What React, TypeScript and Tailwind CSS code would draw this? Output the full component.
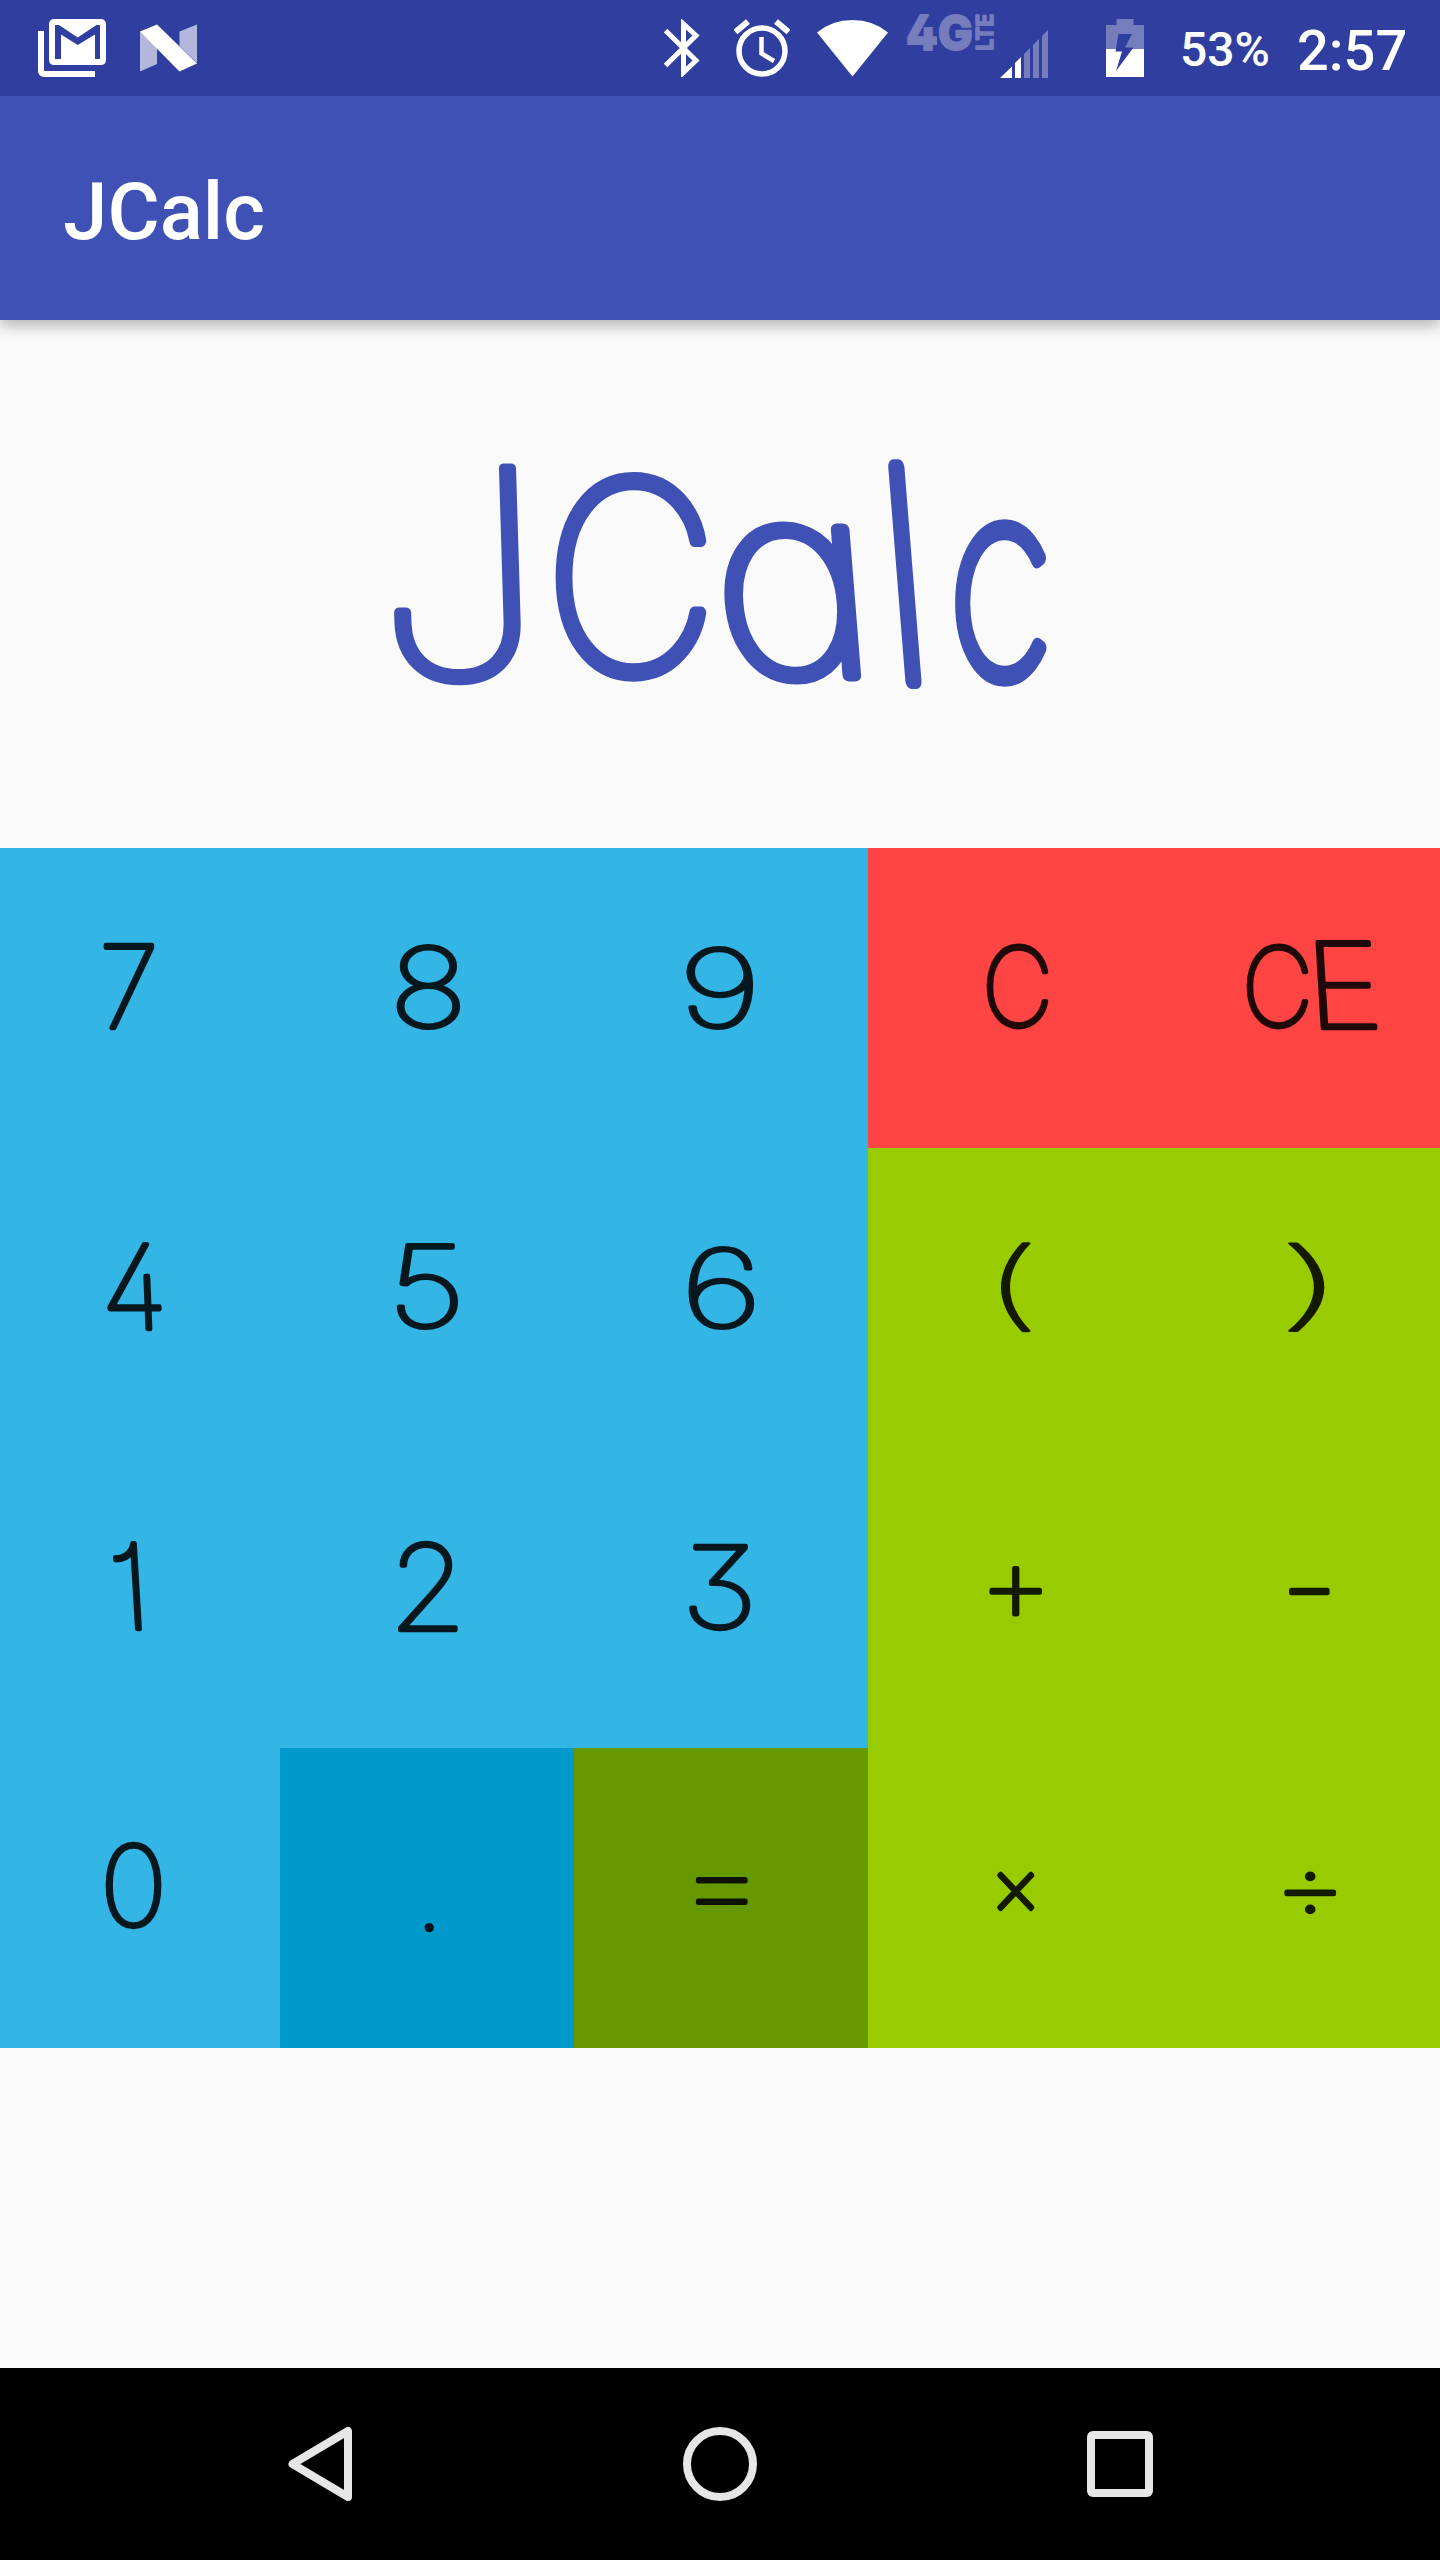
import React from "react";

type Box = [x: number, y: number, w: number, h: number];

interface GlyphProps {
  text: string;
  box: Box;
  pen: number;
  skew?: number;
  font?: string;
  weight?: number;
}

const EM = 120;
const measureCtx = document.createElement("canvas").getContext("2d")!;

/* Real text stretched so that its ink, pen width included, fills the given box. */
function Glyph({ text, box, pen, skew = 0, font = "Inter", weight = 100 }: GlyphProps) {
  measureCtx.font = `${weight} ${EM}px ${font}`;
  const m = measureCtx.measureText(text);
  const left = -m.actualBoundingBoxLeft;
  const top = -m.actualBoundingBoxAscent;
  const inkW = m.actualBoundingBoxRight - left;
  const inkH = m.actualBoundingBoxDescent - top;
  const [x, y, w, h] = box;
  const shear = Math.abs(skew) * (h - pen);
  const sx = (w - pen - shear) / inkW;
  const sy = (h - pen) / inkH;
  const cx = x + w / 2;
  const cy = y + h / 2;
  const mx = left + inkW / 2;
  const my = top + inkH / 2;
  return (
    <text
      transform={`matrix(${sx} 0 ${skew * sy} ${sy} ${cx - sx * mx - skew * sy * my} ${cy - sy * my})`}
      fontFamily={`${font}, sans-serif`}
      fontSize={EM}
      fontWeight={weight}
      fill="currentColor"
      stroke="currentColor"
      strokeWidth={pen}
      strokeLinejoin="round"
      strokeLinecap="round"
      vectorEffect="non-scaling-stroke"
      className="[font-feature-settings:'cv01','cv02','cv09','cv11']"
    >
      {text}
    </text>
  );
}

interface Key {
  label: string;
  bg: string;
  glyphs: { t: string; b: Box; skew?: number; pen?: number }[];
}

const BLUE = "bg-[#33b5e5]";
const RED = "bg-[#ff4444]";
const GREEN = "bg-[#99cc00]";

const keys: Key[] = [
  { label: "7", bg: BLUE, glyphs: [{ t: "7", b: [117, 95, 52, 87] }] },
  { label: "8", bg: BLUE, glyphs: [{ t: "8", b: [116, 95, 64, 87] }] },
  { label: "9", bg: BLUE, glyphs: [{ t: "9", b: [112, 97, 68, 85] }] },
  { label: "C", bg: RED, glyphs: [{ t: "C", b: [118, 95, 63, 86] }] },
  { label: "CE", bg: RED, glyphs: [{ t: "C", b: [84, 95, 63, 86] }, { t: "E", b: [153, 92, 63, 90], skew: 0.06 }] },
  { label: "4", bg: BLUE, glyphs: [{ t: "4", b: [118, 94, 59, 89], skew: 0.04 }] },
  { label: "5", bg: BLUE, glyphs: [{ t: "5", b: [117, 95, 61, 87] }] },
  { label: "6", bg: BLUE, glyphs: [{ t: "6", b: [114, 97, 67, 85] }] },
  { label: "(", bg: GREEN, glyphs: [{ t: "(", b: [132, 93, 31, 92], pen: 3.6 }] },
  { label: ")", bg: GREEN, glyphs: [{ t: ")", b: [126, 93, 36, 92], pen: 3.6 }] },
  { label: "1", bg: BLUE, glyphs: [{ t: "1", b: [126, 93, 31, 90], skew: 0.06 }] },
  { label: "2", bg: BLUE, glyphs: [{ t: "2", b: [118, 92, 60, 92] }] },
  { label: "3", bg: BLUE, glyphs: [{ t: "3", b: [115, 94, 62, 89] }] },
  { label: "+", bg: GREEN, glyphs: [{ t: "+", b: [121, 117, 53, 52] }] },
  { label: "-", bg: GREEN, glyphs: [{ t: "-", b: [127, 139.5, 41, 7.8] }] },
  { label: "0", bg: BLUE, glyphs: [{ t: "0", b: [119, 93, 57, 88] }] },
  { label: ".", bg: "bg-[#0099cc]", glyphs: [{ t: ".", b: [144.5, 175.2, 10, 10] }] },
  { label: "=", bg: "bg-[#669900]", glyphs: [{ t: "=", b: [121, 129, 53, 29] }] },
  { label: "×", bg: GREEN, glyphs: [{ t: "×", b: [129, 123, 38, 40] }] },
  { label: "÷", bg: GREEN, glyphs: [{ t: "÷", b: [122, 123, 52, 44] }] },
];

function StatusBar() {
  return (
    <div className="flex h-24 items-start bg-[#303f9f] text-white">
      <svg className="ml-[38px] mt-[19px] h-[58px] w-[68px]" viewBox="38 19 68 58" fill="none">
        <path d="M41 31v39.5q0 3.5 3.5 3.5H95" stroke="white" strokeWidth="6" />
        <path
          fill="white"
          fillRule="evenodd"
          d="M54.5 19h46q5.500 0 5.500 5.500v35q0 5.500-5.500 5.500h-46q-5.500 0-5.500-5.500v-35q0-5.500 5.500-5.500ZM55 25v34h6V34.500L77.700 45 95 34.500V59h5V25h-3.500L77.700 37.500 59 25Z"
        />
      </svg>
      <svg className="ml-[33px] mt-6 h-[48px] w-[58px]" viewBox="139 24 58 48">
        <path d="M140 31l17 17v16l-17 7.500ZM179.500 31.500 197 24.500V63L179.500 46Z" fill="#b3b7dc" />
        <path d="M140 31.500 157 24.500l40 39-17.500 8Z" fill="white" />
      </svg>
      <svg className="ml-[467px] mt-[19px] h-[58px] w-[37px]" viewBox="664 19 37 58" fill="none" stroke="white" strokeWidth="5">
        <path d="M665.500 30.500 696 60.500 683.500 72.500V24L696 35.500 665.500 65.500" />
      </svg>
      <svg className="ml-[33px] mt-[19px] h-[58px] w-[56px]" viewBox="734 19 56 58" fill="none" stroke="white">
        <circle cx="762" cy="51" r="23" strokeWidth="5.500" />
        <path d="M735.500 32 748 21.500M776 21.500 788.500 32" strokeWidth="6" />
        <path d="M761.500 37v16.500l12.500 7.500" strokeWidth="4.500" />
      </svg>
      <svg className="ml-[27px] mt-[19px] h-[58px] w-[71px]" viewBox="817 19 71 58">
        <path d="M817 32.500Q832 20 852.500 20T888 32.500L852.500 76.500Z" fill="white" />
      </svg>
      <svg className="-mt-4 ml-[11px] h-20 w-[101px] overflow-visible text-[#757dbc]" viewBox="899 -16 101 80">
        <Glyph text="4G" box={[907, 13, 65, 38]} pen={2} font="Inter" weight={800} />
        <g transform="rotate(-90)">
          <Glyph text="LTE" box={[-50, 976, 36, 18]} pen={1.6} font="Inter" weight={700} />
        </g>
      </svg>
      <svg className="mt-[30px] h-12 w-[48px]" viewBox="1000 30 48 48">
        <path d="M1000 78 1012 66.500V78ZM1015 63l6-6V78h-6Z" fill="white" />
        <path d="M1024 54l6-6V78h-6ZM1033 45l6-6V78h-6ZM1042 36l6-6V78h-6Z" fill="#757dbc" />
      </svg>
      <svg className="ml-[58px] mt-[19px] h-[58px] w-[38px]" viewBox="1106 19 38 58">
        <path d="M1106 25h10.500v-6h17v6H1144V49h-38Z" fill="#757dbc" />
        <path d="M1106 49h38v28h-38Z" fill="white" />
        <path d="M1118.500 34H1132l-7 13.500h8.500L1116 71l6-19.500h-6.500Z" fill="#303f9f" />
      </svg>
      <span className="ml-[36px] mt-[21px] w-[88px] font-[Roboto,sans-serif] text-[48px] leading-[57px] font-medium">53%</span>
      <span className="ml-[29px] mt-[18px] font-[Roboto,sans-serif] text-[56px] leading-[66px] font-medium">2:57</span>
    </div>
  );
}

function Logo() {
  return (
    <svg className="h-[528px] w-full text-[#3f51b5]" viewBox="0 320 1440 528">
      <Glyph text="J" box={[389, 464, 135, 221]} pen={10} skew={0.03} />
      <Glyph text="C" box={[554, 471, 154, 210]} pen={12} />
      <Glyph text="a" box={[715, 520, 132, 166]} pen={12} skew={0.08} />
      <Glyph text="l" box={[886, 461, 38, 227]} pen={14} skew={0.08} />
      <Glyph text="c" box={[953, 519, 96, 167]} pen={13} />
    </svg>
  );
}

function NavBar() {
  return (
    <nav className="flex h-48 items-center bg-black">
      <svg className="ml-[288px] h-[76px] w-16" viewBox="288 2426 64 76" fill="none" stroke="#e6e6e6" strokeWidth="8" strokeLinejoin="round">
        <path d="M292.500 2464 348 2431v66Z" />
      </svg>
      <div className="ml-[331px] size-[74px] rounded-full border-8 border-[#e6e6e6]" />
      <div className="ml-[330px] size-[66px] rounded-[6px] border-8 border-[#e6e6e6]" />
    </nav>
  );
}

export default function App() {
  return (
    <div className="flex h-[2560px] w-[1440px] flex-col overflow-hidden bg-[#fafafa]">
      <header className="z-10 shadow-[0_6px_14px_rgba(0,0,0,0.28)]">
        <StatusBar />
        <div className="flex h-56 items-center bg-[#3f51b5] pl-[63px]">
          <h1 className="mt-[7px] font-[Roboto,sans-serif] text-[80px] leading-none font-medium text-white">JCalc</h1>
        </div>
      </header>
      <main className="flex flex-1 flex-col">
        <Logo />
        <div className="-ml-3.5 grid w-[1470px] grid-cols-[repeat(5,294px)] auto-rows-[300px]">
          {keys.map((key) => (
            <button key={key.label} className={key.bg} aria-label={key.label}>
              <svg className="h-[300px] w-[294px] text-black opacity-[0.87]" viewBox="0 0 294 300">
                {key.glyphs.map((g) => (
                  <Glyph key={g.t} text={g.t} box={g.b} skew={g.skew} pen={g.pen ?? 4.6} />
                ))}
              </svg>
            </button>
          ))}
        </div>
      </main>
      <NavBar />
    </div>
  );
}
